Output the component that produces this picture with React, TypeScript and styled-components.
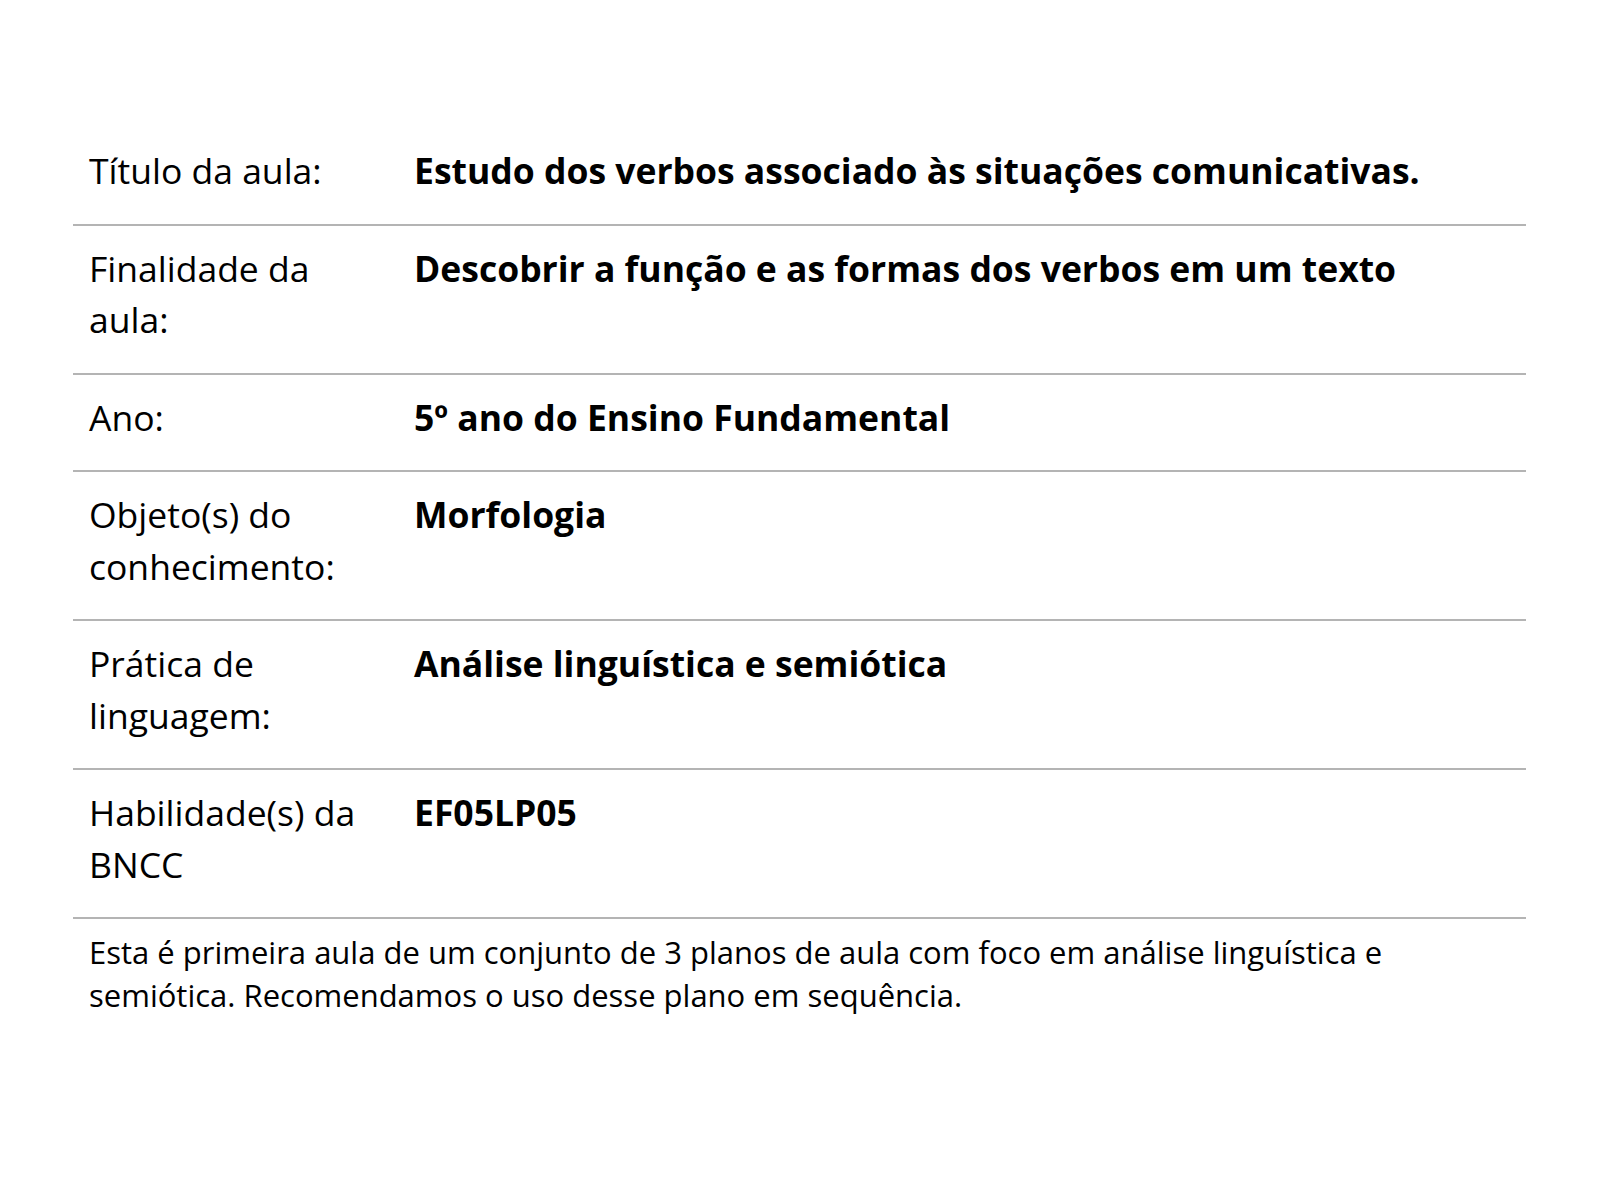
import styled, { createGlobalStyle } from "styled-components";

const GlobalStyle = createGlobalStyle`
  body {
    margin: 0;
    background: #ffffff;
    font-family: "Open Sans", "Noto Sans", sans-serif;
    color: #000000;
  }
`;

const Page = styled.div`
  padding: 128px 74px 0 73px;
`;

const Table = styled.div`
  display: flex;
  flex-direction: column;
`;

const Row = styled.div`
  display: grid;
  grid-template-columns: 325px 1fr;
  border-bottom: 2px solid #b4b4b4;
  padding: 17px 0 27px;
`;

const Label = styled.div`
  padding: 0 16px;
  font-size: 35.5px;
  line-height: 51.5px;
  font-weight: 400;
`;

const Value = styled.div`
  padding: 0 16px;
  font-size: 35.5px;
  line-height: 51.5px;
  font-weight: 700;
`;

const Note = styled.p`
  margin: 0;
  padding: 12px 16px;
  font-size: 31px;
  line-height: 43px;
`;

const rows = [
  ["Título da aula:", "Estudo dos verbos associado às situações comunicativas."],
  ["Finalidade da aula:", "Descobrir a função e as formas dos verbos em um texto"],
  ["Ano:", "5º ano do Ensino Fundamental"],
  ["Objeto(s) do conhecimento:", "Morfologia"],
  ["Prática de linguagem:", "Análise linguística e semiótica"],
  ["Habilidade(s) da BNCC", "EF05LP05"],
];

export default function App() {
  return (
    <>
      <GlobalStyle />
      <Page>
        <Table>
          {rows.map(([label, value]) => (
            <Row key={label}>
              <Label>{label}</Label>
              <Value>{value}</Value>
            </Row>
          ))}
        </Table>
        <Note>
          Esta é primeira aula de um conjunto de 3 planos de aula com foco em
          análise linguística e semiótica. Recomendamos o uso desse plano em
          sequência.
        </Note>
      </Page>
    </>
  );
}
